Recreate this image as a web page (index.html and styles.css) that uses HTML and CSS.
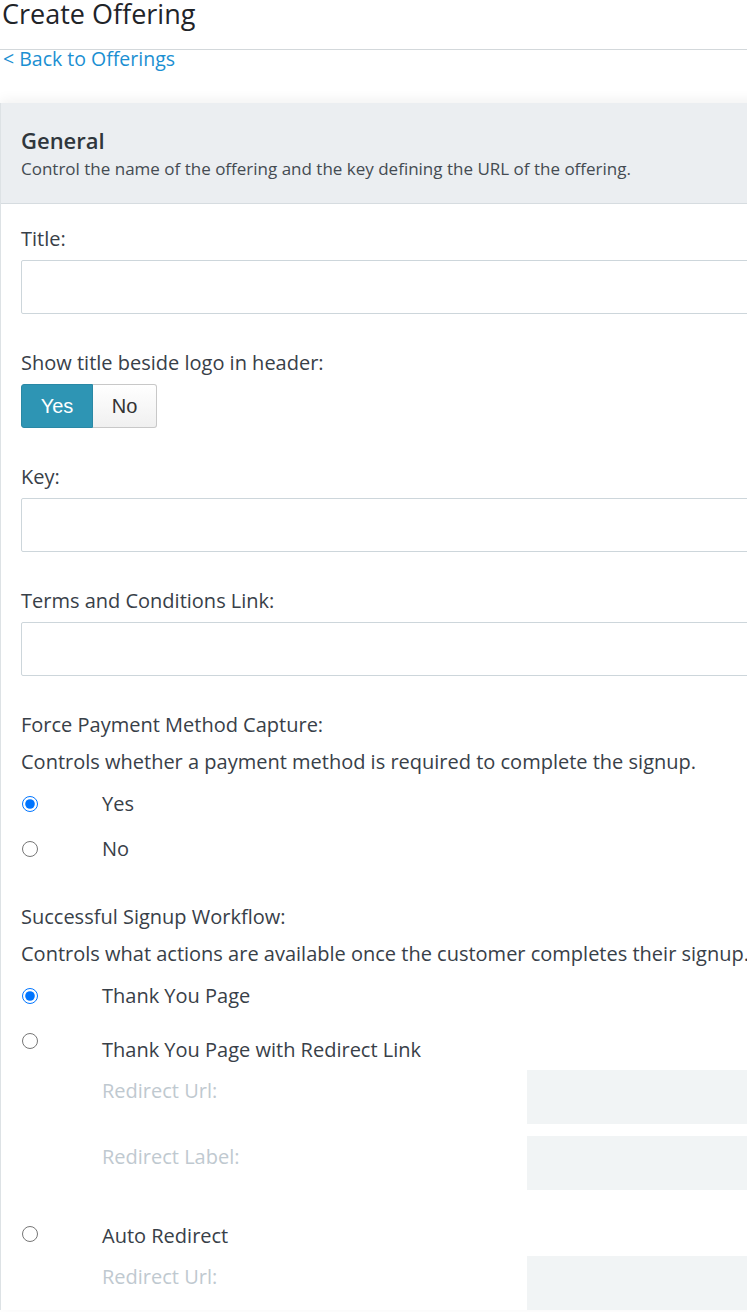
FILE: index.html
```html
<!DOCTYPE html>
<html lang="en">
<head>
    <meta charset="UTF-8">
    <meta name="viewport" content="width=device-width, initial-scale=1.0">
    <title>Create Offering</title>
    <link rel="stylesheet" href="styles.css">
</head>
<body>
    <div class="page">
        <h1 class="page-title">Create Offering</h1>
        <hr class="divider">
        <a class="back-link" href="#">&lt; Back to Offerings</a>

        <div class="panel">
            <div class="panel-header">
                <h2>General</h2>
                <p>Control the name of the offering and the key defining the URL of the offering.</p>
            </div>

            <div class="panel-body">
                <div class="field">
                    <label for="title">Title:</label>
                    <input type="text" id="title" class="text-input">
                </div>

                <div class="field">
                    <label>Show title beside logo in header:</label>
                    <div class="toggle">
                        <button class="toggle-btn active">Yes</button>
                        <button class="toggle-btn">No</button>
                    </div>
                </div>

                <div class="field">
                    <label for="key">Key:</label>
                    <input type="text" id="key" class="text-input">
                </div>

                <div class="field">
                    <label for="terms">Terms and Conditions Link:</label>
                    <input type="text" id="terms" class="text-input">
                </div>

                <div class="group">
                    <label>Force Payment Method Capture:</label>
                    <p class="help">Controls whether a payment method is required to complete the signup.</p>
                    <div class="option">
                        <span class="radio-col"><input type="radio" name="force" checked></span>
                        <span class="option-text">Yes</span>
                    </div>
                    <div class="option">
                        <span class="radio-col"><input type="radio" name="force"></span>
                        <span class="option-text">No</span>
                    </div>
                </div>

                <div class="group">
                    <label>Successful Signup Workflow:</label>
                    <p class="help">Controls what actions are available once the customer completes their signup.</p>
                    <div class="option">
                        <span class="radio-col"><input type="radio" name="workflow" checked></span>
                        <span class="option-text">Thank You Page</span>
                    </div>

                    <div class="option option-block redirect-link">
                        <span class="radio-col"><input type="radio" name="workflow"></span>
                        <div class="option-body">
                            <span class="option-text">Thank You Page with Redirect Link</span>
                            <div class="sub-field">
                                <span class="sub-label">Redirect Url:</span>
                                <div class="sub-input"></div>
                            </div>
                            <div class="sub-field">
                                <span class="sub-label">Redirect Label:</span>
                                <div class="sub-input"></div>
                            </div>
                        </div>
                    </div>

                    <div class="option option-block auto-redirect">
                        <span class="radio-col"><input type="radio" name="workflow"></span>
                        <div class="option-body">
                            <span class="option-text">Auto Redirect</span>
                            <div class="sub-field">
                                <span class="sub-label">Redirect Url:</span>
                                <div class="sub-input"></div>
                            </div>
                        </div>
                    </div>
                </div>
            </div>
        </div>
    </div>
</body>
</html>
```

FILE: styles.css
```css
body {
    margin: 0;
    font-family: "Open Sans", "Noto Sans", sans-serif;
    color: #384048;
    background-color: #fff;
    overflow: hidden;
}

.page {
    width: 820px;
}

.page-title {
    margin: 0 0 0 2px;
    font-size: 27px;
    font-weight: 400;
    line-height: 28px;
    color: #1f2429;
}

.divider {
    margin: 21px 0 0;
    border: 0;
    border-top: 1px solid #d3d8db;
}

.back-link {
    display: block;
    margin-left: 3px;
    font-size: 19.5px;
    line-height: 18px;
    color: #1b8fd2;
    text-decoration: none;
}

.panel {
    margin-top: 35px;
    border-left: 1px solid #dde2e5;
    box-shadow: 0 -3px 12px rgba(0, 0, 0, 0.06);
}

.panel-header {
    background-color: #ebeef1;
    padding: 23px 20px 22px;
    border-bottom: 1px solid #d6dce0;
}

.panel-header h2 {
    margin: 0;
    font-size: 22px;
    font-weight: 600;
    line-height: 28px;
    color: #2f363c;
}

.panel-header p {
    margin: 2px 0 0;
    font-size: 17px;
    line-height: 25px;
    color: #444b52;
}

.panel-body {
    padding: 21px 20px 0;
}

.field {
    margin-bottom: 35px;
}

.field label,
.group label {
    display: block;
    font-size: 20px;
    line-height: 27px;
    margin-bottom: 8px;
}

.text-input {
    display: block;
    box-sizing: border-box;
    width: 100%;
    height: 54px;
    border: 1px solid #cdd6db;
    border-radius: 2px;
    background-color: #fff;
}

.toggle {
    display: flex;
}

.toggle-btn {
    height: 44px;
    font-family: "Liberation Sans", Arial, sans-serif;
    font-size: 20px;
    color: #333;
    background: linear-gradient(#fff, #f0f0f0);
    border: 1px solid #c8c8c8;
    padding: 0;
    width: 64px;
}

.toggle-btn:first-child {
    border-radius: 3px 0 0 3px;
}

.toggle-btn:last-child {
    border-radius: 0 3px 3px 0;
    border-left: 0;
}

.toggle-btn.active {
    width: 72px;
    color: #fff;
    background: #2e95b4;
    border-color: #2a88a5;
}

.group {
    margin-bottom: 32px;
}

.group label {
    margin-bottom: 0;
}

.help {
    margin: 10px 0 6px;
    font-size: 20px;
    line-height: 27px;
}

.option {
    display: flex;
    align-items: center;
    padding: 9px 0;
    font-size: 20px;
    line-height: 27px;
}

.radio-col {
    display: flex;
    width: 81px;
}

.radio-col input {
    width: 16px;
    height: 16px;
    margin: 0 0 0 1px;
}

.option-block {
    align-items: flex-start;
    padding: 0;
}

.option-body {
    flex: 1;
}

.redirect-link {
    padding-top: 18px;
}

.redirect-link .radio-col {
    margin-top: -3px;
}

.auto-redirect {
    padding-top: 32px;
}

.auto-redirect .radio-col {
    margin-top: 4px;
}

.sub-field {
    display: flex;
    margin-top: 7px;
}

.sub-field + .sub-field {
    margin-top: 12px;
}

.sub-label {
    width: 425px;
    padding-top: 7px;
    font-size: 20px;
    line-height: 27px;
    color: #bfc9d0;
}

.sub-input {
    flex: 1;
    height: 54px;
    background-color: #f1f4f5;
}
```
